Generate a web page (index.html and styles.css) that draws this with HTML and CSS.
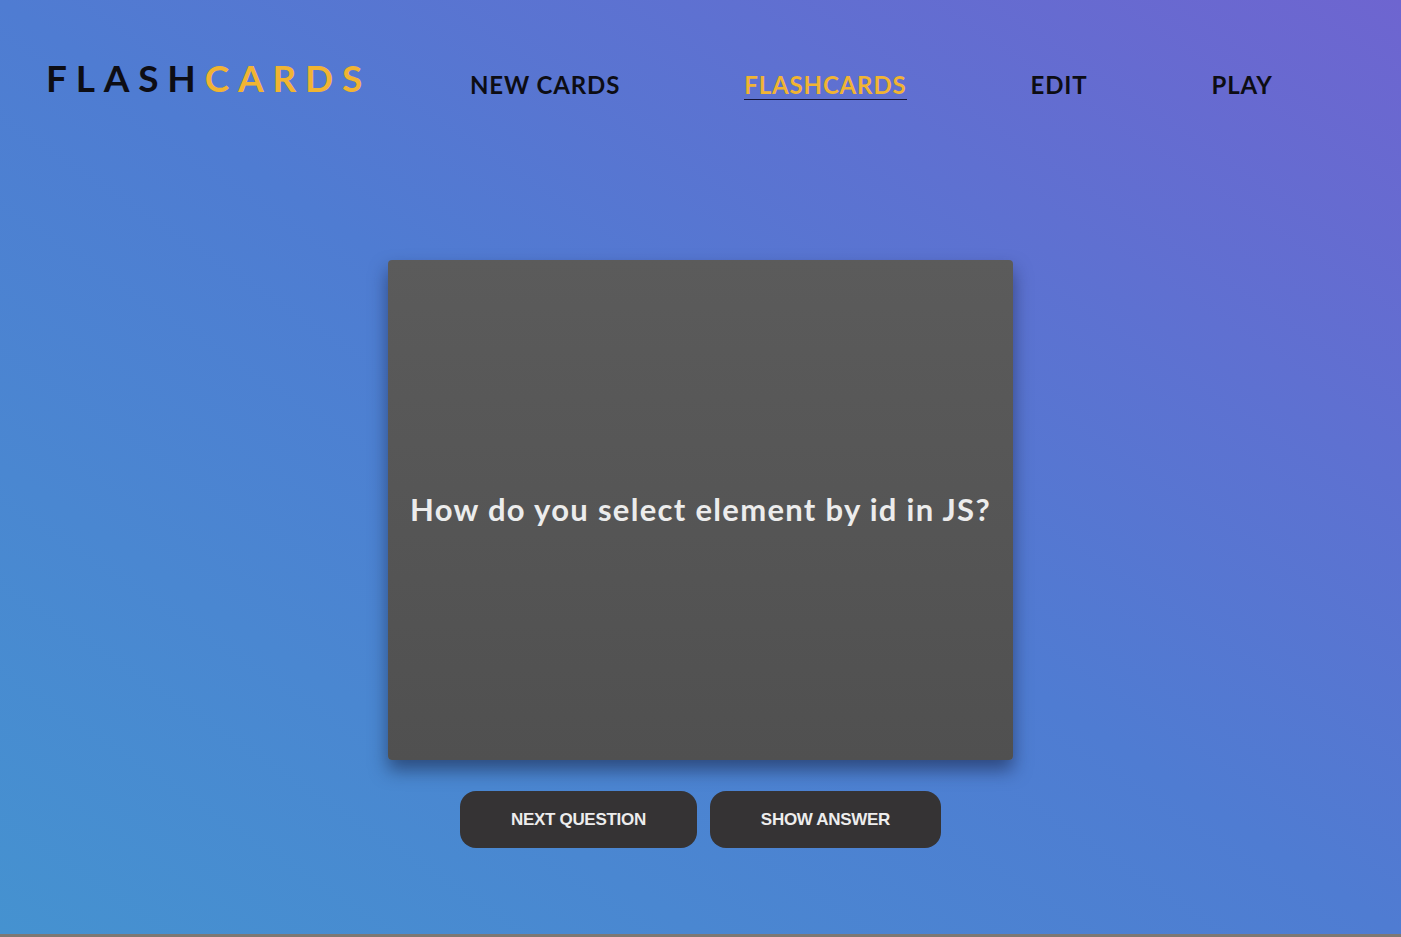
FILE: index.html
```html
<!DOCTYPE html>
<html lang="en">
<head>
<meta charset="utf-8">
<title>Flashcards</title>
<link rel="stylesheet" href="styles.css">
</head>
<body>
<div class="page">
  <header class="header">
    <div class="logo"><span class="logo-dark">FLASH</span><span class="logo-accent">CARDS</span></div>
    <nav class="nav">
      <a class="nav-link" href="#">NEW CARDS</a>
      <a class="nav-link active" href="#">FLASHCARDS</a>
      <a class="nav-link" href="#">EDIT</a>
      <a class="nav-link" href="#">PLAY</a>
    </nav>
  </header>
  <main class="main">
    <div class="card">
      <p class="question">How do you select element by id in JS?</p>
    </div>
    <div class="actions">
      <button class="btn">NEXT QUESTION</button>
      <button class="btn">SHOW ANSWER</button>
    </div>
  </main>
</div>
</body>
</html>
```
FILE: styles.css
```css
html {
  background: #7d7873;
}
body {
  margin: 0;
  font-family: "Lato", "Liberation Sans", sans-serif;
}
.page {
  height: 934px;
  background: linear-gradient(to top right, #4592d0 0%, #4f7cd2 50%, #6e65d0 100%);
  display: flex;
  flex-direction: column;
}
.header {
  display: flex;
  align-items: center;
  padding: 60px 0 0 46px;
  height: 40px;
}
.logo {
  font-size: 37px;
  font-weight: 700;
  letter-spacing: 8.8px;
  width: 424px;
  line-height: 40px;
  margin-top: -4px;
}
.logo-dark { color: #0d0d14; }
.logo-accent { color: #f1b432; }
.nav {
  display: flex;
  gap: 124px;
  padding-top: 11px;
}
.nav-link {
  color: #0d0d14;
  text-decoration: none;
  font-size: 24px;
  font-weight: 700;
  line-height: 28px;
  letter-spacing: 0.85px;
}
.nav-link.active {
  color: #f1b432;
  border-bottom: 1.5px solid #141437;
}
.main {
  display: flex;
  flex-direction: column;
  align-items: center;
  padding-top: 160px;
}
.card {
  width: 625px;
  height: 500px;
  border-radius: 4px;
  background: linear-gradient(to bottom, #5b5b5b, #505050);
  box-shadow: 0 10px 18px rgba(20, 30, 60, 0.55);
  display: flex;
  align-items: center;
  justify-content: center;
}
.question {
  margin: 0;
  color: #ececec;
  font-size: 31px;
  font-weight: 700;
  letter-spacing: 1.3px;
  margin-top: -2px;
}
.actions {
  display: flex;
  gap: 13px;
  margin-top: 31px;
}
.btn {
  height: 57px;
  padding: 0 51px;
  border: none;
  border-radius: 16px;
  background: #353334;
  color: #ededed;
  font-family: "Liberation Sans", Arial, sans-serif;
  font-size: 17px;
  font-weight: 700;
  letter-spacing: -0.3px;
}
```
